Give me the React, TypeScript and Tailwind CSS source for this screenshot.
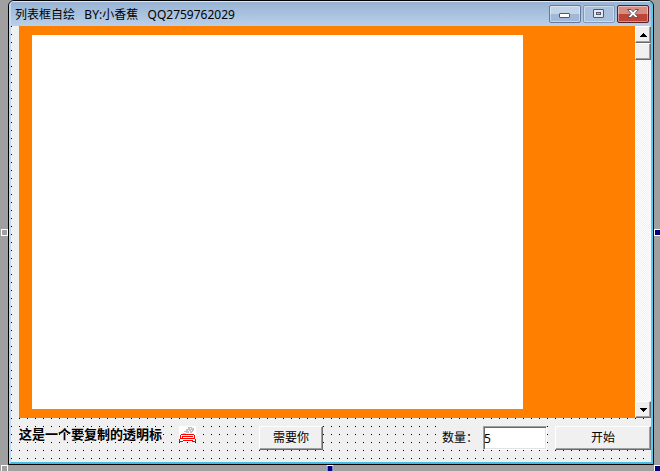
import React from "react";

const raised =
  "border border-t-white border-l-white border-r-[#696969] border-b-[#696969] bg-[#f0f0f0] shadow-[inset_-1px_-1px_0_#a0a0a0]";

function CaptionButton({ label, className, children }: { label: string; className: string; children: React.ReactNode }) {
  return (
    <button
      type="button"
      aria-label={label}
      className={`flex h-[18px] w-8 items-center justify-center rounded-xs border shadow-[inset_0_0_0_1px_rgba(255,255,255,0.4)] ${className}`}
    >
      {children}
    </button>
  );
}

function TitleBar() {
  return (
    <header className="flex h-6 shrink-0 items-center justify-between bg-linear-to-b from-[#98b3d3] to-[#b9d0ea] pr-[2px] pl-1">
      <h1 className="pt-[2px] text-[12px] leading-4 whitespace-pre text-black">列表框自绘   BY:小香蕉   QQ2759762029</h1>
      <div className="flex gap-[2px]">
        <CaptionButton label="最小化" className="border-[#64799a] bg-linear-to-b from-[#c3d4e8] from-50% to-[#a0b9d8] to-50%">
          <svg width="12" height="12" viewBox="0 0 12 12" aria-hidden="true">
            <rect x="0.5" y="5.5" width="10" height="4" rx="0.5" fill="#fff" stroke="#535666" />
          </svg>
        </CaptionButton>
        <CaptionButton label="最大化" className="border-[#8298b8] bg-[#abc2de]">
          <svg width="12" height="12" viewBox="0 0 12 12" aria-hidden="true">
            <rect x="0.5" y="1.5" width="10" height="8" rx="0.5" fill="#e4e9f1" stroke="#535666" />
            <rect x="3.5" y="4.5" width="4" height="2" fill="#abc2de" stroke="#535666" />
          </svg>
        </CaptionButton>
        <CaptionButton label="关闭" className="border-[#5c1f24] bg-linear-to-b from-[#d88c80] from-50% to-[#bd4638] to-50%">
          <svg width="12" height="12" viewBox="0 0 12 12" aria-hidden="true">
            <path d="M0.500 1.500h3.500L6 3.700l2-2.200h3.500L8 5.500l3.500 4H8L6 7.300l-2 2.200H0.500L4 5.500z" fill="#fff" stroke="#535666" />
          </svg>
        </CaptionButton>
      </div>
    </header>
  );
}

function ScrollBar() {
  return (
    <div className="flex w-4 shrink-0 flex-col bg-[#f8f8f8] bg-[conic-gradient(#fff_25%,#f0f0f0_0_50%,#fff_0_75%,#f0f0f0_0)] bg-size-[2px_2px]">
      <button type="button" aria-label="向上滚动" className={`flex h-[17px] items-center justify-center ${raised}`}>
        <svg width="7" height="4" viewBox="0 0 7 4" shapeRendering="crispEdges" aria-hidden="true">
          <path d="M3 0h1v1h1v1h1v1h1v1H0V3h1V2h1V1h1z" />
        </svg>
      </button>
      <button type="button" aria-label="滚动滑块" className={`h-[17px] ${raised}`} />
      <button type="button" aria-label="向下滚动" className={`mt-auto flex h-[17px] items-center justify-center ${raised}`}>
        <svg width="7" height="4" viewBox="0 0 7 4" shapeRendering="crispEdges" aria-hidden="true">
          <path d="M0 0h7v1H6v1H5v1H4v1H3V3H2V2H1V1H0z" />
        </svg>
      </button>
    </div>
  );
}

function PictureIcon() {
  return (
    <svg className="ml-[17px] shrink-0" width="17" height="17" viewBox="0 0 17 17" shapeRendering="crispEdges" aria-hidden="true">
      <path d="M0 0h17v16H0z" fill="#fff" />
      <path d="M9 1h4v1h2v3h-1v1h-1v1h-2V5h-1v2H7V6H5V5h2V3h2zM4 7h3v1H4z" fill="#c0c0c0" />
      <path d="M11 2h1v1h-1zM12 4h1v1h-1zM9 4h1v1H9z" fill="#fff" />
      <path d="M2 8h13v1H2zM1 9h1v3H1zM15 9h1v3h-1zM4 10h10v1H4zM3 10h1v2H3zM1 12h15v1H1zM0 13h1v3H0zM16 13h1v3h-1zM1 15h3v1H1zM4 14h10v1H4zM13 15h3v1h-3z" fill="#f00" />
    </svg>
  );
}

function BottomBar() {
  return (
    <div className="flex h-11 shrink-0 items-start pt-2 pl-2 text-[12px] text-black">
      <div className="flex flex-1 items-start">
        <span className="shrink-0 text-[13px] leading-4 font-bold whitespace-nowrap">这是一个要复制的透明标</span>
        <PictureIcon />
      </div>
      <button type="button" className={`mr-[119px] h-6 w-16 shrink-0 ${raised}`}>
        需要你
      </button>
      <label htmlFor="count" className="h-6 w-[41px] shrink-0 bg-[#f0f0f0] leading-6">
        数量：
      </label>
      <input
        id="count"
        type="text"
        defaultValue="5"
        className="mr-2 h-6 w-16 shrink-0 border border-t-[#a0a0a0] border-r-white border-b-white border-l-[#a0a0a0] bg-white shadow-[inset_1px_1px_0_#696969,inset_-1px_-1px_0_#e3e3e3] outline-none"
      />
      <button type="button" className={`h-6 w-24 shrink-0 ${raised}`}>
        开始
      </button>
    </div>
  );
}

const lockedHandle = "absolute size-[7px] border border-white bg-[#a0a0a0]";
const sizeHandle = "absolute size-[7px] border border-white bg-[#000080]";

export default function App() {
  return (
    <main className="relative flex h-screen flex-col overflow-hidden bg-[#a0a0a0] pr-[6px] pb-[6px] pl-2 font-['Noto_Sans','Noto_Sans_CJK_SC',sans-serif]">
      <section className="flex flex-1 flex-col rounded-t-md border border-black bg-[#43bfe5]">
        <div className="flex flex-1 flex-col overflow-hidden rounded-t-[5px] border-t border-r-2 border-b-2 border-l-2 border-t-[#dceafa] border-r-[#50cdf0] border-b-[#43bfe5] border-l-[#c0daf6]">
          <TitleBar />
          <div className="flex flex-1 flex-col bg-[#f0f0f0] bg-[conic-gradient(from_270deg_at_1px_1px,#000_90deg,transparent_0)] bg-size-[8px_8px]">
            <div className="flex flex-1 pl-2">
              <div className="flex flex-1 bg-[#ff8000] pt-[9px] pr-28 pb-[9px] pl-[13px]">
                <div className="flex-1 bg-white" />
              </div>
              <ScrollBar />
            </div>
            <BottomBar />
          </div>
        </div>
      </section>
      <i className={`${lockedHandle} top-[229px] left-px`} />
      <i className={`${lockedHandle} -bottom-px left-px`} />
      <i className={`${sizeHandle} top-[229px] -right-px`} />
      <i className={`${sizeHandle} -bottom-px left-1/2 -translate-x-1/2`} />
      <i className={`${sizeHandle} -right-px -bottom-px`} />
    </main>
  );
}
